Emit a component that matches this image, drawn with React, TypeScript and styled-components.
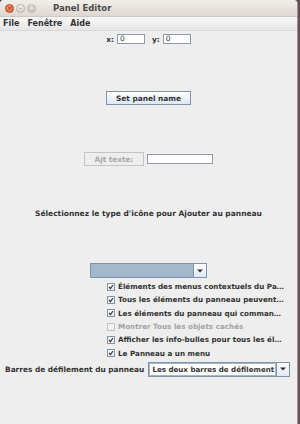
import React from "react";
import styled, { createGlobalStyle } from "styled-components";

const GlobalStyle = createGlobalStyle`
  html, body {
    margin: 0;
    padding: 0;
    background: #4a4a58;
  }
  body {
    font-family: "DejaVu Sans", "Liberation Sans", sans-serif;
  }
`;

const Screen = styled.div`
  width: 300px;
  height: 424px;
  display: flex;
  background: linear-gradient(90deg, #3c3f5a 0%, #6a4b58 100%);
`;

const Window = styled.div`
  width: 297px;
  height: 424px;
  display: flex;
  flex-direction: column;
  background: #eeeeee;
  border-radius: 4px 4px 0 0;
  overflow: hidden;
  box-shadow: 1px 0 0 #9a9a9a;
`;

const TitleBar = styled.div`
  height: 16px;
  display: flex;
  align-items: center;
  padding-left: 5px;
  gap: 2px;
  background: linear-gradient(#f1eeea, #ddd7d0);
  border-bottom: 1px solid #cfc9c1;
`;

const WinButton = styled.span<{ $close?: boolean }>`
  width: 9px;
  height: 9px;
  border-radius: 50%;
  box-sizing: border-box;
  display: flex;
  align-items: center;
  justify-content: center;
  font-size: 6px;
  line-height: 1;
  color: ${(p) => (p.$close ? "#7a2a10" : "#8a8580")};
  background: ${(p) =>
    p.$close
      ? "radial-gradient(circle at 40% 35%, #f6a27c, #e2541f)"
      : "linear-gradient(#f4f2ef, #d3cec8)"};
  border: 1px solid ${(p) => (p.$close ? "#b4441b" : "#b8b3ad")};
`;

const Title = styled.span`
  margin-left: 15px;
  font-size: 8.5px;
  font-weight: bold;
  color: #4c4a47;
`;

const MenuBar = styled.div`
  height: 13px;
  display: flex;
  align-items: center;
  gap: 8px;
  padding-left: 3px;
  background: linear-gradient(#f7f7f7, #e6e6e6);
  border-bottom: 1px solid #d8d8d8;
`;

const MenuItem = styled.span`
  font-size: 8px;
  font-weight: bold;
  color: #333333;
`;

const Content = styled.div`
  flex: 1;
  display: flex;
  flex-direction: column;
  align-items: center;
  padding-top: 3px;
`;

const Row = styled.div<{ $gap?: number; $top?: number }>`
  display: flex;
  align-items: center;
  justify-content: center;
  gap: ${(p) => p.$gap ?? 3}px;
  margin-top: ${(p) => p.$top ?? 0}px;
`;

const Label = styled.span<{ $muted?: boolean }>`
  font-size: 7.4px;
  font-weight: bold;
  color: ${(p) => (p.$muted ? "#a3a3a3" : "#333333")};
  white-space: nowrap;
`;

const Field = styled.div<{ $w: number }>`
  width: ${(p) => p.$w}px;
  height: 10px;
  box-sizing: border-box;
  border: 1px solid #8e9aa8;
  background: #ffffff;
  font-size: 7.5px;
  line-height: 8px;
  padding-left: 2px;
  color: #333;
`;

const Button = styled.div<{ $disabled?: boolean }>`
  height: 14px;
  box-sizing: border-box;
  display: flex;
  align-items: center;
  padding: 0 9px;
  font-size: 7.4px;
  font-weight: bold;
  color: ${(p) => (p.$disabled ? "#a8a8a8" : "#333333")};
  background: ${(p) =>
    p.$disabled ? "#eeeeee" : "linear-gradient(#ffffff, #dde8f3)"};
  border: 1px solid ${(p) => (p.$disabled ? "#c4c4c4" : "#7f93a9")};
`;

const Heading = styled.div`
  margin-top: 43px;
  font-size: 7.5px;
  font-weight: bold;
  color: #333333;
`;

const Combo = styled.div<{ $w: number; $fill?: boolean }>`
  width: ${(p) => p.$w}px;
  height: 15px;
  box-sizing: border-box;
  display: flex;
  border: 1px solid #7f93a9;
  background: ${(p) => (p.$fill ? "#a4b8cd" : "#ffffff")};
`;

const ComboText = styled.span`
  flex: 1;
  font-size: 7.1px;
  font-weight: bold;
  color: #333;
  padding-left: 2px;
  display: flex;
  align-items: center;
  white-space: nowrap;
  overflow: hidden;
  border: 1px solid #a4b8cd;
`;

const ComboArrow = styled.span`
  width: 12px;
  flex: none;
  display: flex;
  align-items: center;
  justify-content: center;
  background: linear-gradient(#ffffff, #dde8f3);
  border-left: 1px solid #7f93a9;
`;

const Checks = styled.div`
  align-self: stretch;
  display: flex;
  flex-direction: column;
  padding-left: 107px;
  padding-top: 2px;
`;

const CheckRow = styled.div<{ $disabled?: boolean }>`
  height: 13.3px;
  display: flex;
  align-items: center;
  gap: 3px;
  width: 179px;
  color: ${(p) => (p.$disabled ? "#a3a3a3" : "#333333")};
`;

const Box = styled.span<{ $disabled?: boolean }>`
  width: 8px;
  height: 8px;
  flex: none;
  box-sizing: border-box;
  border: 1px solid ${(p) => (p.$disabled ? "#c2c2c2" : "#7f93a9")};
  background: ${(p) => (p.$disabled ? "#f2f2f2" : "linear-gradient(#ffffff, #dde8f3)")};
  display: flex;
  align-items: center;
  justify-content: center;
`;

const CheckText = styled.span`
  font-size: 7.2px;
  font-weight: bold;
  white-space: nowrap;
  overflow: hidden;
  text-overflow: ellipsis;
`;

const BottomRow = styled.div`
  align-self: stretch;
  display: flex;
  align-items: center;
  gap: 4px;
  padding-left: 5px;
  margin-top: 2px;
`;

const Arrow = () => (
  <svg width="6" height="4" viewBox="0 0 6 4">
    <path d="M0 0.5h6L3 3.5z" fill="#333" />
  </svg>
);

const Tick = () => (
  <svg width="6" height="6" viewBox="0 0 6 6">
    <path d="M1 3l1.5 1.5L5 1" stroke="#333" strokeWidth="1.2" fill="none" />
  </svg>
);

const options = [
  { text: "Éléments des menus contextuels du Panneau", on: true },
  { text: "Tous les éléments du panneau peuvent être déplacés", on: true },
  { text: "Les éléments du panneau qui commandent des objets", on: true },
  { text: "Montrer Tous les objets cachés", on: false, disabled: true },
  { text: "Afficher les info-bulles pour tous les éléments", on: true },
  { text: "Le Panneau a un menu", on: true },
];

export default function App() {
  return (
    <>
      <GlobalStyle />
      <Screen>
        <Window>
          <TitleBar>
            <WinButton $close>×</WinButton>
            <WinButton>–</WinButton>
            <WinButton>□</WinButton>
            <Title>Panel Editor</Title>
          </TitleBar>
          <MenuBar>
            <MenuItem>File</MenuItem>
            <MenuItem>Fenêtre</MenuItem>
            <MenuItem>Aide</MenuItem>
          </MenuBar>
          <Content>
            <Row $gap={3}>
              <Label>x:</Label>
              <Field $w={28}>0</Field>
              <Label style={{ marginLeft: 4 }}>y:</Label>
              <Field $w={28}>0</Field>
            </Row>
            <Row $top={47}>
              <Button>Set panel name</Button>
            </Row>
            <Row $top={47} $gap={3}>
              <Button $disabled>Ajt texte:</Button>
              <Field $w={66} />
            </Row>
            <Heading>Sélectionnez le type d'icône pour Ajouter au panneau</Heading>
            <Row $top={45}>
              <Combo $w={117} $fill>
                <ComboText />
                <ComboArrow>
                  <Arrow />
                </ComboArrow>
              </Combo>
            </Row>
            <Checks>
              {options.map((o) => (
                <CheckRow key={o.text} $disabled={o.disabled}>
                  <Box $disabled={o.disabled}>{o.on && <Tick />}</Box>
                  <CheckText>{o.text}</CheckText>
                </CheckRow>
              ))}
            </Checks>
            <BottomRow>
              <Label>Barres de défilement du panneau</Label>
              <Combo $w={142}>
                <ComboText>Les deux barres de défilement</ComboText>
                <ComboArrow>
                  <Arrow />
                </ComboArrow>
              </Combo>
            </BottomRow>
          </Content>
        </Window>
      </Screen>
    </>
  );
}
